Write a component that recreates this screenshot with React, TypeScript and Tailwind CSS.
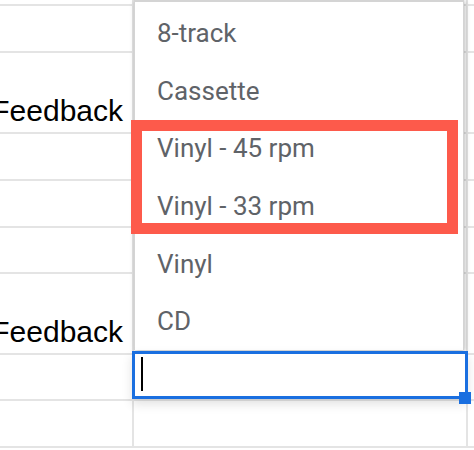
import React from 'react';

const rows = [
  { h: 'h-[6px]', label: '' },
  { h: 'h-[47px]', label: '' },
  { h: 'h-[81px]', label: 'Feedback' },
  { h: 'h-[47px]', label: '' },
  { h: 'h-[47px]', label: '' },
  { h: 'h-[46px]', label: '' },
  { h: 'h-[81px]', label: 'Feedback' },
  { h: 'h-[46px]', label: '' },
  { h: 'h-[47px]', label: '' },
];

const options = ['8-track', 'Cassette', 'Vinyl - 45 rpm', 'Vinyl - 33 rpm', 'Vinyl', 'CD'];

export default function App() {
  return (
    <div className="relative w-[474px] h-[450px] overflow-hidden bg-white">
      {/* sheet grid */}
      <div className="flex flex-col">
        {rows.map((r, i) => (
          <div key={i} className={`flex ${r.h} border-b-2 border-[#e4e4e4]`}>
            <div className="w-[134px] shrink-0 border-r-2 border-[#e4e4e4] flex items-end justify-end pr-[9px] pb-[6px] overflow-hidden">
              {r.label && (
                <span className="text-[30px] leading-none text-black whitespace-nowrap" style={{ fontFamily: '"Liberation Sans", Arial, sans-serif' }}>
                  {r.label}
                </span>
              )}
            </div>
            <div className="w-[334px] shrink-0 border-r-2 border-[#e4e4e4]" />
            <div className="flex-1" />
          </div>
        ))}
      </div>

      {/* validation dropdown */}
      <div className="absolute left-[134px] top-[0px] w-[330px] h-[350px] bg-white border-x border-t-2 border-[#d4d4d4] shadow-[1px_1px_5px_rgba(0,0,0,0.28)] pt-[3px]">
        {options.map((o) => (
          <div
            key={o}
            className="h-[57.6px] flex items-center pl-[22px] text-[26px] text-[#5f6368] whitespace-nowrap"
            style={{ fontFamily: 'Roboto, "Noto Sans", sans-serif' }}
          >
            {o}
          </div>
        ))}
      </div>

      {/* red annotation box */}
      <div className="absolute left-[131px] top-[120px] w-[327px] h-[114px] border-[11px] border-[#fd5a4b]" />

      {/* active input cell */}
      <div className="absolute left-[132px] top-[351px] w-[336px] h-[48px] border-[3px] border-[#1a6fe0] bg-white shadow-[0_5px_10px_rgba(0,0,0,0.12)]">
        <div className="ml-[6px] mt-[3px] w-[2px] h-[34px] bg-black" />
      </div>
      <div className="absolute left-[459px] top-[392px] w-[12px] h-[12px] bg-[#1a6fe0]" />
    </div>
  );
}
